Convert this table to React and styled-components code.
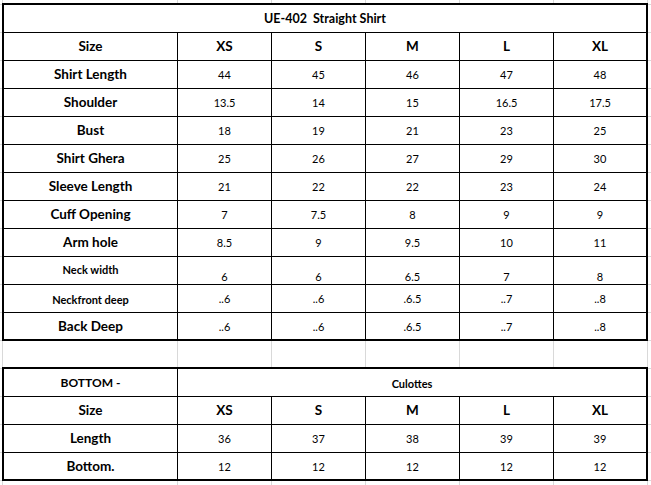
import styled, { createGlobalStyle } from "styled-components";

const GlobalStyle = createGlobalStyle`
  html, body {
    margin: 0;
    padding: 0;
  }
  body {
    width: 651px;
    height: 485px;
    overflow: hidden;
    background-color: #ffffff;
    background-image: repeating-linear-gradient(
      to bottom,
      #d9d9d9 0,
      #d9d9d9 1px,
      transparent 1px,
      transparent 28px
    );
    background-position: 0 4px;
    font-family: Lato, "Liberation Sans", sans-serif;
    color: #000;
  }
`;

const COLUMNS = "173px 93px 93px 93px 93px 92px";

const Sheet = styled.div`
  display: flex;
  flex-direction: column;
  width: 651px;
`;

// empty excel rows between/around the tables, only gridlines visible
const Strip = styled.div`
  display: grid;
  grid-template-columns: ${COLUMNS};
  column-gap: 1px;
  height: ${(p) => p.$h}px;
  margin-left: 2px;
  width: max-content;
  padding: 0 1px;
  border-left: 1px solid #d9d9d9;
  border-right: 1px solid #d9d9d9;
  background: #d9d9d9 content-box;
`;

const StripCell = styled.div`
  background: #fff;
`;

const Table = styled.div`
  display: grid;
  grid-template-columns: ${COLUMNS};
  grid-template-rows: ${(p) => `repeat(${p.$rows - 1}, 27px) 26px`};
  gap: 1px;
  margin-left: 2px;
  width: max-content;
  border: 2px solid #000;
  background: #000;
`;

const Cell = styled.div`
  display: flex;
  justify-content: center;
  align-items: ${(p) =>
    p.$valign === "top" ? "flex-start" : p.$valign === "bottom" ? "flex-end" : "center"};
  padding: ${(p) =>
    p.$valign === "top" ? "7px 0 0" : p.$valign === "bottom" ? "0 0 2px" : p.$bold ? "1px 0 0" : "0"};
  grid-column: ${(p) => p.$span || "auto"};
  background: #fff;
  font-size: ${(p) => p.$size || 11}px;
  font-weight: ${(p) => (p.$bold ? 700 : 400)};
  white-space: pre;
  line-height: 1;
`;

const sizes = ["XS", "S", "M", "L", "XL"];

const shirtRows = [
  { label: "Shirt Length", values: ["44", "45", "46", "47", "48"] },
  { label: "Shoulder", values: ["13.5", "14", "15", "16.5", "17.5"] },
  { label: "Bust", values: ["18", "19", "21", "23", "25"] },
  { label: "Shirt Ghera", values: ["25", "26", "27", "29", "30"] },
  { label: "Sleeve Length", values: ["21", "22", "22", "23", "24"] },
  { label: "Cuff Opening", values: ["7", "7.5", "8", "9", "9"] },
  { label: "Arm hole", values: ["8.5", "9", "9.5", "10", "11"] },
  {
    label: "Neck width",
    values: ["6", "6", "6.5", "7", "8"],
    labelSize: 11,
    labelAlign: "top",
    valueAlign: "bottom",
  },
  { label: "Neckfront deep", values: ["..6", "..6", ".6.5", "..7", "..8"], labelSize: 11 },
  { label: "Back Deep", values: ["..6", "..6", ".6.5", "..7", "..8"] },
];

const bottomRows = [
  { label: "Length", values: ["36", "37", "38", "39", "39"] },
  { label: "Bottom.", values: ["12", "12", "12", "12", "12"] },
];

const EmptyStrip = ({ h }) => (
  <Strip $h={h}>
    {Array.from({ length: 6 }).map((_, i) => (
      <StripCell key={i} />
    ))}
  </Strip>
);

const SizeHeader = () => (
  <>
    <Cell $bold $size={13.5}>Size</Cell>
    {sizes.map((s) => (
      <Cell key={s} $bold $size={13.5}>
        {s}
      </Cell>
    ))}
  </>
);

const MeasureRow = ({ row }) => (
  <>
    <Cell $bold $size={row.labelSize || 13.5} $valign={row.labelAlign}>
      {row.label}
    </Cell>
    {row.values.map((v, i) => (
      <Cell key={i} $valign={row.valueAlign}>
        {v}
      </Cell>
    ))}
  </>
);

export default function App() {
  return (
    <Sheet>
      <GlobalStyle />
      <EmptyStrip h={3} />
      <Table $rows={12}>
        <Cell $span="1 / -1" $bold $size={12.5}>
          {"UE-402  Straight Shirt"}
        </Cell>
        <SizeHeader />
        {shirtRows.map((r) => (
          <MeasureRow key={r.label} row={r} />
        ))}
      </Table>
      <EmptyStrip h={26} />
      <Table $rows={4}>
        <Cell $bold $size={12}>BOTTOM -</Cell>
        <Cell $span="2 / -1" $bold $size={11}>
          Culottes
        </Cell>
        <SizeHeader />
        {bottomRows.map((r) => (
          <MeasureRow key={r.label} row={r} />
        ))}
      </Table>
      <EmptyStrip h={4} />
    </Sheet>
  );
}
